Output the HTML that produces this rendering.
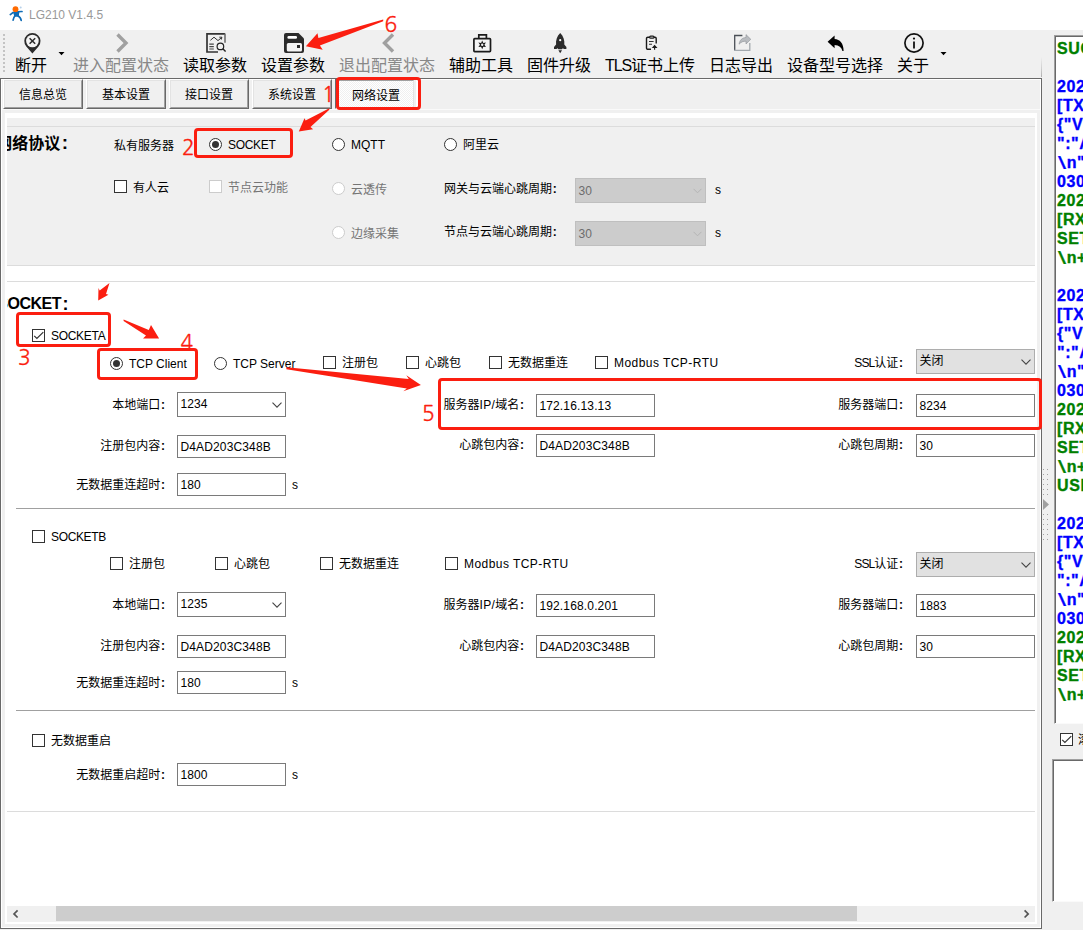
<!DOCTYPE html>
<html lang="zh-CN">
<head>
<meta charset="utf-8">
<title>LG210 V1.4.5</title>
<style>
*{box-sizing:border-box;margin:0;padding:0}
html,body{width:1083px;height:930px;overflow:hidden;background:#f0f0f0}
body{position:relative;font-family:"Liberation Sans","Noto Sans CJK SC",sans-serif;font-size:12px;color:#000;line-height:1}
.a{position:absolute;white-space:nowrap}
.t{position:absolute;white-space:nowrap;height:16px;line-height:16px;font-size:12px}
.r{text-align:right}
#title{left:0;top:0;width:1083px;height:30px;background:#fff}
#title .txt{left:29px;top:6px;height:18px;line-height:18px;font-size:12px;color:#999}
.tb{position:absolute;top:56px;height:20px;line-height:20px;font-size:16px;white-space:nowrap}
.dis{color:#888}
.dg{color:#757575}
.ic{position:absolute;overflow:visible}
.tab{position:absolute;top:79px;width:80px;height:30px;background:#f0f0f0;border-top:1px solid #fff;border-left:1px solid #fff;border-right:1px solid #696969;border-bottom:1px solid #696969;text-align:center;line-height:30px;font-size:12px}
.tab:after{content:"";position:absolute;left:0;top:0;right:0;bottom:0;border-left:1px solid #e3e3e3;border-top:1px solid #e3e3e3;border-right:1px solid #a0a0a0;border-bottom:1px solid #a0a0a0}
.tab.sel{border-color:#696969 #fff #fff #696969;background:repeating-conic-gradient(#fff 0 25%,#f0f0f0 0 50%) 0 0/2px 2px;line-height:32px;padding-left:2px}
.tab.sel:after{border-color:#a0a0a0 #e3e3e3 #e3e3e3 #a0a0a0}
.hl{position:absolute;height:1px}
.hd{font-size:16px;font-weight:bold;line-height:28px}
.cb{position:absolute;width:13px;height:13px;border:1px solid #333;background:#fff}
.cb.d{border-color:#ccc}
.rd{position:absolute;width:13px;height:13px;border:1px solid #333;border-radius:50%;background:#fff}
.rd.d{border-color:#ccc}
.rd.on:after{content:"";position:absolute;left:2px;top:2px;width:7px;height:7px;border-radius:50%;background:#333}
.cb svg{position:absolute;left:-1px;top:-1px}
.in{position:absolute;height:23px;border:1px solid #7a7a7a;background:#fff;font-size:12px;line-height:22px;padding-left:2.4px;white-space:nowrap;letter-spacing:0.15px}
.cmb{position:absolute;height:25px;border:1px solid #adadad;background:#e1e1e1;font-size:12px;line-height:22px;padding-left:2.4px;letter-spacing:0.15px;white-space:nowrap}
.cmb .ar{position:absolute;right:3px;top:9px}
.lb b{margin-left:0.8px}
.ip{letter-spacing:0.33px}
.ssl{letter-spacing:-0.95px}
.cmb.w{background:#fff;border-color:#7a7a7a}
.cmb.d{background:#ccc;border-color:#bfbfbf;color:#6d6d6d;line-height:24px}
.red{position:absolute;border:3px solid #fb1e10;border-radius:4px}
.num{position:absolute;color:#fb1e10;font-family:"NanumGothic","Liberation Sans",sans-serif;font-size:21px;line-height:24px;white-space:nowrap;-webkit-text-stroke:0.3px #fb1e10}
.log{position:absolute;left:1057px;font-size:16px;font-weight:bold;line-height:19px;height:19px;white-space:nowrap;letter-spacing:0.6px;-webkit-text-stroke:0.35px currentColor}
.log i{font-style:normal;font-weight:normal;-webkit-text-stroke:0.2px currentColor;display:inline-block;transform:scale(1.8,1.18);transform-origin:0 40%;margin:0 4.2px 0 0.5px}
.g{color:#008000}.b{color:#0000ff}
</style>
</head>
<body>
<!-- title bar -->
<div class="a" id="title">
<svg class="ic" style="left:0;top:0" width="30" height="30" viewBox="0 0 30 30"><g stroke="#0f6cb6" stroke-width="1.7" stroke-linecap="round" fill="none"><path d="M12.9 12.6 L10.3 14.6"/><path d="M13.2 12.5 C16 11.9 19 11.6 22 11.5"/><path d="M15.2 15.5 C13.8 17 13.3 18.6 13.1 20.2"/><path d="M17.6 15.5 C19.8 16.8 21 18.6 21.2 20.4"/></g><path d="M13.2 12.2 L19.4 11.8 L18.7 16.8 L14.3 16.8 Z" fill="#0f6cb6"/><circle cx="15.5" cy="9.2" r="2.9" fill="#ff6a00"/><circle cx="20.7" cy="7.4" r="1" fill="#b5d0ea"/></svg>
<div class="a txt">LG210 V1.4.5</div>
</div>
<!-- toolbar -->
<div class="a" id="toolbar" style="left:0;top:30px;width:1041px;height:48px;background:#f0f0f0"></div>
<div class="tb" style="left:15px">断开</div>
<div class="tb dis" style="left:73px">进入配置状态</div>
<div class="tb" style="left:183px">读取参数</div>
<div class="tb" style="left:261px">设置参数</div>
<div class="tb dis" style="left:339px">退出配置状态</div>
<div class="tb" style="left:449px">辅助工具</div>
<div class="tb" style="left:527px">固件升级</div>
<div class="tb" style="left:605px"><span style="letter-spacing:-1.1px">TLS</span>证书上传</div>
<div class="tb" style="left:709px">日志导出</div>
<div class="tb" style="left:787px">设备型号选择</div>
<div class="tb" style="left:897px">关于</div>

<!-- toolbar icons -->
<svg class="ic" style="left:0;top:0" width="1083" height="930" viewBox="0 0 1083 930">
<g id="grip" fill="#c3c3c3"><rect x="3" y="34" width="2" height="2"/><rect x="3" y="38" width="2" height="2"/><rect x="3" y="42" width="2" height="2"/><rect x="3" y="46" width="2" height="2"/><rect x="3" y="50" width="2" height="2"/><rect x="3" y="54" width="2" height="2"/><rect x="3" y="58" width="2" height="2"/><rect x="3" y="62" width="2" height="2"/><rect x="3" y="66" width="2" height="2"/><rect x="3" y="70" width="2" height="2"/></g>
<!-- disconnect pin -->
<path d="M32.4 53.4 L26.3 46.5 A8.1 8.1 0 1 1 38.5 46.5 Z" fill="#2b2b2b"/>
<circle cx="32.4" cy="41" r="6.3" fill="#f4f4f4"/>
<path d="M29.6 38.3 L35.2 43.8 M35.2 38.3 L29.6 43.8" stroke="#2b2b2b" stroke-width="1.5" fill="none"/>
<path d="M58.5 52 L64.5 52 L61.5 55.2 Z" fill="#000"/>
<!-- enter config chevron -->
<path d="M117.5 34.5 L126 43 L117.5 51.5" stroke="#a0a0a0" stroke-width="3.4" fill="none"/>
<!-- read params -->
<path d="M225 33.9 L207 33.9 L207 52 L218 52" stroke="#333" stroke-width="1.7" fill="none"/>
<path d="M225 33.5 L225 42.8" stroke="#666" stroke-width="1.5" fill="none"/>
<path d="M210.4 40.3 L214 37.2 L218 40.6 L221.6 37.5 M219.3 37.2 L221.9 37.2 L221.3 39.6" stroke="#333" stroke-width="1" fill="none"/>
<path d="M209.3 44.2 H213.8 M209.3 46.6 H213.8 M209.3 49 H213.8" stroke="#444" stroke-width="1.2" fill="none"/>
<circle cx="220.4" cy="46.4" r="3.3" stroke="#222" stroke-width="1.2" fill="none"/>
<path d="M222.8 48.8 L225.6 51.6" stroke="#222" stroke-width="1.4" fill="none"/>
<!-- save -->
<path d="M286 33 H298.5 L304 38.5 V51 A2 2 0 0 1 302 53 H286 A2 2 0 0 1 284 51 V35 A2 2 0 0 1 286 33 Z" fill="#2b2b2b"/>
<rect x="287.4" y="36" width="9.6" height="2.8" rx="1.3" fill="#fff"/>
<rect x="286.8" y="43" width="15.2" height="8.4" rx="1.5" fill="#f4f4f4"/>
<rect x="297" y="45" width="3" height="3" fill="#2b2b2b"/>
<!-- exit config chevron -->
<path d="M393 34.5 L384.5 43 L393 51.5" stroke="#a0a0a0" stroke-width="3.4" fill="none"/>
<!-- toolbox -->
<rect x="473.9" y="38.6" width="16.6" height="13" rx="0.8" stroke="#1a1a1a" stroke-width="1.7" fill="#f4f4f4"/>
<path d="M478.8 38.4 V34.8 H486.4 V38.4" stroke="#1a1a1a" stroke-width="1.7" fill="none"/>
<path d="M482.2 40.4 L483.3 42.9 L486 42.6 L484.4 44.8 L486 47 L483.3 46.7 L482.2 49.2 L481.1 46.7 L478.4 47 L480 44.8 L478.4 42.6 L481.1 42.9 Z" fill="#1a1a1a"/>
<circle cx="482.2" cy="44.8" r="1.2" fill="#f4f4f4"/>
<!-- rocket -->
<path d="M560.2 33 C563.5 36 564.8 40.5 564.3 44.5 L566.4 47 V49 H564 L562.8 48.3 L562 49.3 H558.4 L557.6 48.3 L556.4 49 H554 V47 L556.1 44.5 C555.6 40.5 556.9 36 560.2 33 Z" fill="#2b2b2b"/>
<path d="M558.4 50.3 H562 L560.2 53.2 Z" fill="#2b2b2b"/>
<circle cx="560.2" cy="40.2" r="1.1" fill="#fff"/>
<!-- clipboard -->
<path d="M649.5 37.2 H647.8 A1.3 1.3 0 0 0 646.5 38.5 V48 A1.3 1.3 0 0 0 647.8 49.3 H651" stroke="#1a1a1a" stroke-width="1.4" fill="none"/>
<path d="M654 37.2 H655 A1.2 1.2 0 0 1 656.2 38.4 V43.5" stroke="#1a1a1a" stroke-width="1.4" fill="none"/>
<rect x="649.6" y="36.2" width="4.4" height="2" rx="1" stroke="#1a1a1a" stroke-width="1.2" fill="none"/>
<path d="M649 41.5 H653.6 M649 44.3 H652" stroke="#333" stroke-width="1.1" fill="none"/>
<path d="M654.6 49.8 V46 M652.9 47.5 L654.6 45.5 L656.3 47.5 Z" stroke="#1a1a1a" stroke-width="1.1" fill="#1a1a1a"/>
<!-- export -->
<path d="M742.4 35.5 H734.7 V50.5" stroke="#4a4f56" stroke-width="1.3" fill="none"/>
<path d="M734.2 50.4 H749.8 V43" stroke="#a3a9ae" stroke-width="1.3" fill="none"/>
<path d="M739.1 44.2 C739.6 40 742.3 37.7 746 37.5 V34.6 L750.8 39.3 L746 44 V41.2 C743.2 41.1 741 42 739.1 44.2 Z" fill="#b9bcc0" stroke="#8d9297" stroke-width="0.6"/>
<!-- undo -->
<path d="M827.6 41.7 L834.6 35.4 V38.9 C839.8 39.2 843.6 43 843.6 51 H842.4 C841.6 47.3 839 45.2 834.6 45 V48.2 Z" fill="#000"/>
<!-- about -->
<circle cx="914" cy="43" r="9.1" stroke="#111" stroke-width="1.7" fill="none"/>
<circle cx="914" cy="38.6" r="1.1" fill="#111"/>
<path d="M914 41.6 V48.5" stroke="#111" stroke-width="1.8" fill="none"/>
<path d="M940.5 52 L946.5 52 L943.5 55.2 Z" fill="#000"/>
</svg>
<div class="a" style="left:1041px;top:32px;width:1px;height:45px;background:linear-gradient(#f0f0f0 55%,#d0d0d0 80%,#b0b0b0)"></div>
<!-- tabs -->
<div class="a" style="left:0;top:78px;width:1042px;height:851px;border:1px solid #696969"></div>
<div class="a" style="left:1px;top:79px;width:1040px;height:849px;border:1px solid #fff"></div>
<div class="hl" style="left:2px;top:109px;width:1038px;background:#fafafa"></div>
<div class="tab" style="left:3px">信息总览</div>
<div class="tab" style="left:86px">基本设置</div>
<div class="tab" style="left:169px">接口设置</div>
<div class="tab" style="left:252px">系统设置</div>
<div class="tab sel" style="left:335px">网络设置</div>
<div class="a" style="left:414px;top:80px;width:2px;height:28px;background:#f0f0f0"></div>
<div class="a" style="left:416px;top:80px;width:2px;height:28px;background:#fff"></div>
<!-- main scroll panel -->
<div class="a" style="left:5px;top:113px;width:1032px;height:811px;background:#fff"></div>
<div class="a" style="left:7px;top:118px;width:1028px;height:148px;background:#f0f0f0;border-bottom:1px solid #dcdcdc"></div>
<div class="hl" style="left:7px;top:126px;width:1028px;background:#dcdcdc"></div>
<div class="hl" style="left:7px;top:281px;width:1028px;background:#dcdcdc"></div>
<div class="hl" style="left:16px;top:508px;width:1019px;background:#a0a0a0"></div>
<div class="hl" style="left:16px;top:710px;width:1019px;background:#a0a0a0"></div>
<div class="hl" style="left:7px;top:811px;width:1028px;background:#dcdcdc"></div>
<!-- protocol group -->
<div class="a hd" style="left:7px;top:129px;width:63px;height:28px;overflow:hidden"><div class="a" style="right:2px;top:0">网络协议<span style="margin-left:1.5px;font-size:19px">:</span></div></div>
<div class="t" style="left:114px;top:138px">私有服务器</div>
<div class="rd on" style="left:209px;top:138px"></div><div class="t" style="left:228px;top:137px;letter-spacing:-0.3px">SOCKET</div>
<div class="rd" style="left:332px;top:138px"></div><div class="t" style="left:351px;top:137px">MQTT</div>
<div class="rd" style="left:444px;top:138px"></div><div class="t" style="left:463px;top:137px">阿里云</div>
<div class="cb" style="left:114px;top:180px"></div><div class="t" style="left:133px;top:180px">有人云</div>
<div class="cb d" style="left:209px;top:180px"></div><div class="t dg" style="left:228px;top:180px">节点云功能</div>
<div class="rd d" style="left:332px;top:182px"></div><div class="t dg" style="left:351px;top:182px">云透传</div>
<div class="t lb" style="left:444px;top:181px">网关与云端心跳周期<b>:</b></div>
<div class="cmb d" style="left:575px;top:178px;width:131px">30<svg class="ar" width="9" height="6" viewBox="0 0 9 6"><path d="M0.5 0.8 L4.5 4.8 L8.5 0.8" stroke="#b4b4b4" stroke-width="1" fill="none"/></svg></div><div class="t" style="left:715px;top:182px">s</div>
<div class="rd d" style="left:332px;top:226px"></div><div class="t dg" style="left:351px;top:226px">边缘采集</div>
<div class="t lb" style="left:444px;top:224px">节点与云端心跳周期<b>:</b></div>
<div class="cmb d" style="left:575px;top:221px;width:131px">30<svg class="ar" width="9" height="6" viewBox="0 0 9 6"><path d="M0.5 0.8 L4.5 4.8 L8.5 0.8" stroke="#b4b4b4" stroke-width="1" fill="none"/></svg></div><div class="t" style="left:715px;top:225px">s</div>
<!-- SOCKET group -->
<div class="a hd" style="left:7px;top:289px;width:63px;height:28px;overflow:hidden"><div class="a" style="right:2px;top:0;letter-spacing:-0.5px">SOCKET<span style="margin-left:1.5px;font-size:18px;position:relative;top:0.5px">:</span></div></div>
<div class="cb" style="left:32px;top:329px"><svg width="13" height="13" viewBox="0 0 13 13"><path d="M2.2 6.8 L4.9 9.5 L11.3 3.1" stroke="#333" stroke-width="1.2" fill="none"/></svg></div><div class="t" style="left:51px;top:328px;letter-spacing:-0.3px">SOCKETA</div>
<div class="rd on" style="left:110px;top:357px"></div><div class="t" style="left:129px;top:356px">TCP Client</div>
<div class="rd" style="left:214px;top:357px"></div><div class="t" style="left:233px;top:356px">TCP Server</div>
<div class="cb" style="left:323px;top:356px"></div><div class="t" style="left:342px;top:355px">注册包</div>
<div class="cb" style="left:406px;top:356px"></div><div class="t" style="left:425px;top:355px">心跳包</div>
<div class="cb" style="left:489px;top:356px"></div><div class="t" style="left:508px;top:355px">无数据重连</div>
<div class="cb" style="left:595px;top:356px"></div><div class="t" style="left:614px;top:355px;letter-spacing:0.45px">Modbus TCP-RTU</div>
<div class="t lb" style="right:180px;top:355px"><span class="ssl">SSL</span>认证<b>:</b></div>
<div class="cmb" style="left:916px;top:349px;width:119px">关闭<svg class="ar" width="10" height="6" viewBox="0 0 10 6"><path d="M0.5 0.6 L5 5.1 L9.5 0.6" stroke="#444" stroke-width="1.1" fill="none"/></svg></div>
<div class="t lb" style="right:918px;top:397px">本地端口<b>:</b></div>
<div class="cmb w" style="left:177px;top:392px;width:109px">1234<svg class="ar" width="10" height="6" viewBox="0 0 10 6"><path d="M0.5 0.6 L5 5.1 L9.5 0.6" stroke="#444" stroke-width="1.1" fill="none"/></svg></div>
<div class="t lb" style="right:559px;top:397px">服务器<span class="ip">IP/</span>域名<b>:</b></div>
<div class="in" style="left:536px;top:394px;width:119px">172.16.13.13</div>
<div class="t lb" style="right:180px;top:397px">服务器端口<b>:</b></div>
<div class="in" style="left:916px;top:394px;width:119px">8234</div>
<div class="t lb" style="right:918px;top:438px">注册包内容<b>:</b></div>
<div class="in" style="left:177px;top:435px;width:109px">D4AD203C348B</div>
<div class="t lb" style="right:559px;top:437px">心跳包内容<b>:</b></div>
<div class="in" style="left:536px;top:434px;width:119px">D4AD203C348B</div>
<div class="t lb" style="right:180px;top:437px">心跳包周期<b>:</b></div>
<div class="in" style="left:916px;top:434px;width:119px">30</div>
<div class="t lb" style="right:918px;top:477px">无数据重连超时<b>:</b></div>
<div class="in" style="left:177px;top:473px;width:109px">180</div>
<div class="t" style="left:292px;top:477px">s</div>
<!-- SOCKETB -->
<div class="cb" style="left:32px;top:530px"></div><div class="t" style="left:51px;top:529px;letter-spacing:-0.35px">SOCKETB</div>
<div class="cb" style="left:110px;top:557px"></div><div class="t" style="left:129px;top:556px">注册包</div>
<div class="cb" style="left:215px;top:557px"></div><div class="t" style="left:234px;top:556px">心跳包</div>
<div class="cb" style="left:320px;top:557px"></div><div class="t" style="left:339px;top:556px">无数据重连</div>
<div class="cb" style="left:445px;top:557px"></div><div class="t" style="left:464px;top:556px;letter-spacing:0.45px">Modbus TCP-RTU</div>
<div class="t lb" style="right:180px;top:556px"><span class="ssl">SSL</span>认证<b>:</b></div>
<div class="cmb" style="left:916px;top:552px;width:119px">关闭<svg class="ar" width="10" height="6" viewBox="0 0 10 6"><path d="M0.5 0.6 L5 5.1 L9.5 0.6" stroke="#444" stroke-width="1.1" fill="none"/></svg></div>
<div class="t lb" style="right:918px;top:597px">本地端口<b>:</b></div>
<div class="cmb w" style="left:177px;top:592px;width:109px">1235<svg class="ar" width="10" height="6" viewBox="0 0 10 6"><path d="M0.5 0.6 L5 5.1 L9.5 0.6" stroke="#444" stroke-width="1.1" fill="none"/></svg></div>
<div class="t lb" style="right:559px;top:597px">服务器<span class="ip">IP/</span>域名<b>:</b></div>
<div class="in" style="left:536px;top:594px;width:119px">192.168.0.201</div>
<div class="t lb" style="right:180px;top:597px">服务器端口<b>:</b></div>
<div class="in" style="left:916px;top:594px;width:119px">1883</div>
<div class="t lb" style="right:918px;top:638px">注册包内容<b>:</b></div>
<div class="in" style="left:177px;top:635px;width:109px">D4AD203C348B</div>
<div class="t lb" style="right:559px;top:638px">心跳包内容<b>:</b></div>
<div class="in" style="left:536px;top:635px;width:119px">D4AD203C348B</div>
<div class="t lb" style="right:180px;top:638px">心跳包周期<b>:</b></div>
<div class="in" style="left:916px;top:635px;width:119px">30</div>
<div class="t lb" style="right:918px;top:675px">无数据重连超时<b>:</b></div>
<div class="in" style="left:177px;top:671px;width:109px">180</div>
<div class="t" style="left:292px;top:675px">s</div>
<!-- restart -->
<div class="cb" style="left:32px;top:734px"></div><div class="t" style="left:51px;top:733px">无数据重启</div>
<div class="t lb" style="right:918px;top:767px">无数据重启超时<b>:</b></div>
<div class="in" style="left:177px;top:763px;width:109px">1800</div>
<div class="t" style="left:292px;top:767px">s</div>
<!-- h scrollbar -->
<div class="a" style="left:7px;top:906px;width:1028px;height:16px;background:#f0f0f0"></div>
<div class="a" style="left:56px;top:906px;width:801px;height:15px;background:#cdcdcd"></div>
<svg class="ic" style="left:0;top:0" width="1083" height="930" viewBox="0 0 1083 930">
<g fill="#a0a0a0"><rect x="1043" y="469" width="1" height="1"/><rect x="1047" y="469" width="1" height="1"/><rect x="1043" y="474" width="1" height="1"/><rect x="1047" y="474" width="1" height="1"/><rect x="1043" y="479" width="1" height="1"/><rect x="1047" y="479" width="1" height="1"/><rect x="1043" y="484" width="1" height="1"/><rect x="1047" y="484" width="1" height="1"/><rect x="1043" y="489" width="1" height="1"/><rect x="1047" y="489" width="1" height="1"/><rect x="1043" y="494" width="1" height="1"/><rect x="1047" y="494" width="1" height="1"/><rect x="1043" y="514" width="1" height="1"/><rect x="1047" y="514" width="1" height="1"/><rect x="1043" y="519" width="1" height="1"/><rect x="1047" y="519" width="1" height="1"/><rect x="1043" y="524" width="1" height="1"/><rect x="1047" y="524" width="1" height="1"/><rect x="1043" y="529" width="1" height="1"/><rect x="1047" y="529" width="1" height="1"/><rect x="1043" y="534" width="1" height="1"/><rect x="1047" y="534" width="1" height="1"/><rect x="1043" y="539" width="1" height="1"/><rect x="1047" y="539" width="1" height="1"/><path d="M1043 499 L1049 504.5 L1043 510 Z"/></g>
<path d="M17.6 910.3 L14 913.9 L17.6 917.5" stroke="#555" stroke-width="1.7" fill="none"/>
<path d="M1024.6 910.3 L1028.2 913.9 L1024.6 917.5" stroke="#555" stroke-width="1.7" fill="none"/>
</svg>
<!-- right panel -->
<div class="a" style="left:1054px;top:35px;width:40px;height:689px;background:#fff;border-left:1px solid #a0a0a0;border-top:1px solid #a0a0a0;border-bottom:1px solid #fafafa"><div class="a" style="left:0;top:0;width:40px;height:687px;border-left:1px solid #696969;border-top:1px solid #696969"></div></div>
<div class="a" style="left:1052px;top:759px;width:40px;height:143px;background:#fff;border-left:1px solid #a0a0a0;border-top:1px solid #a0a0a0;border-bottom:1px solid #fafafa"><div class="a" style="left:0;top:0;width:40px;height:141px;border-left:1px solid #696969;border-top:1px solid #696969"></div></div>
<div class="cb" style="left:1060px;top:733px"><svg width="13" height="13" viewBox="0 0 13 13"><path d="M2.2 6.8 L4.9 9.5 L11.3 3.1" stroke="#333" stroke-width="1.2" fill="none"/></svg></div><div class="t" style="left:1078px;top:732px">滚动</div>
<div class="log g" style="top:39px">SUCCESS</div>
<div class="log b" style="top:77px">2024-01-12</div>
<div class="log b" style="top:96px">[TX]</div>
<div class="log b" style="top:115px">{&quot;VER</div>
<div class="log b" style="top:134px">&quot;:&quot;AT</div>
<div class="log b" style="top:153px"><i>\</i>n&quot;}</div>
<div class="log b" style="top:172px">030</div>
<div class="log g" style="top:191px">2024-01-12</div>
<div class="log g" style="top:210px">[RX]</div>
<div class="log g" style="top:229px">SET</div>
<div class="log g" style="top:248px"><i>\</i>n+OK</div>
<div class="log b" style="top:286px">2024-01-12</div>
<div class="log b" style="top:305px">[TX]</div>
<div class="log b" style="top:324px">{&quot;VER</div>
<div class="log b" style="top:343px">&quot;:&quot;AT</div>
<div class="log b" style="top:362px"><i>\</i>n&quot;}</div>
<div class="log b" style="top:381px">030</div>
<div class="log g" style="top:400px">2024-01-12</div>
<div class="log g" style="top:419px">[RX]</div>
<div class="log g" style="top:438px">SET</div>
<div class="log g" style="top:457px"><i>\</i>n+OK</div>
<div class="log g" style="top:476px">USR</div>
<div class="log b" style="top:514px">2024-01-12</div>
<div class="log b" style="top:533px">[TX]</div>
<div class="log b" style="top:552px">{&quot;VER</div>
<div class="log b" style="top:571px">&quot;:&quot;AT</div>
<div class="log b" style="top:590px"><i>\</i>n&quot;}</div>
<div class="log b" style="top:609px">030</div>
<div class="log g" style="top:628px">2024-01-12</div>
<div class="log g" style="top:647px">[RX]</div>
<div class="log g" style="top:666px">SET</div>
<div class="log g" style="top:685px"><i>\</i>n+OK</div>
<!-- annotations -->
<div class="red" style="left:336px;top:77px;width:85px;height:33px"></div>
<div class="red" style="left:194px;top:128px;width:99px;height:30px"></div>
<div class="red" style="left:16px;top:312px;width:95px;height:35px"></div>
<div class="red" style="left:97px;top:348px;width:101px;height:32px"></div>
<div class="red" style="left:438px;top:378px;width:604px;height:52px"></div>
<div class="num" style="left:384.5px;top:13px">6</div>
<div class="num" style="left:322px;top:83px">1</div>
<div class="num" style="left:182px;top:136px">2</div>
<div class="num" style="left:18px;top:346px">3</div>
<div class="num" style="left:180.5px;top:331px">4</div>
<div class="num" style="left:422px;top:402px">5</div>
<svg class="ic" style="left:0;top:0" width="1083" height="930" viewBox="0 0 1083 930">
<g fill="#fb1e10">
<path d="M383.2 19.4 L318.4 37.9 L317.5 33.3 L305.9 46.3 L322.7 49.8 L319.9 45.4 L383.2 21.2 Z"/>
<path d="M329.3 108.3 L305.6 120.4 L304.5 118.3 L298.8 131.4 L313.1 129.2 L310.5 127.1 L329.3 109.8 Z"/>
<path d="M109.5 282.9 L99.7 290.5 L98.5 288 L98.2 300.4 L108.4 294.7 L106 294 Z"/>
<path d="M123.6 319.5 L148.8 330 L151 325 L159.1 338.4 L143 338.6 L146 335.5 L123.6 321 Z"/>
<path d="M286.4 367.3 L408.8 378.9 L406.3 375.2 L420.9 384.9 L403.3 391.2 L406.8 388.5 L286.4 369.3 Z"/>
</g>
</svg>
</body>
</html>
